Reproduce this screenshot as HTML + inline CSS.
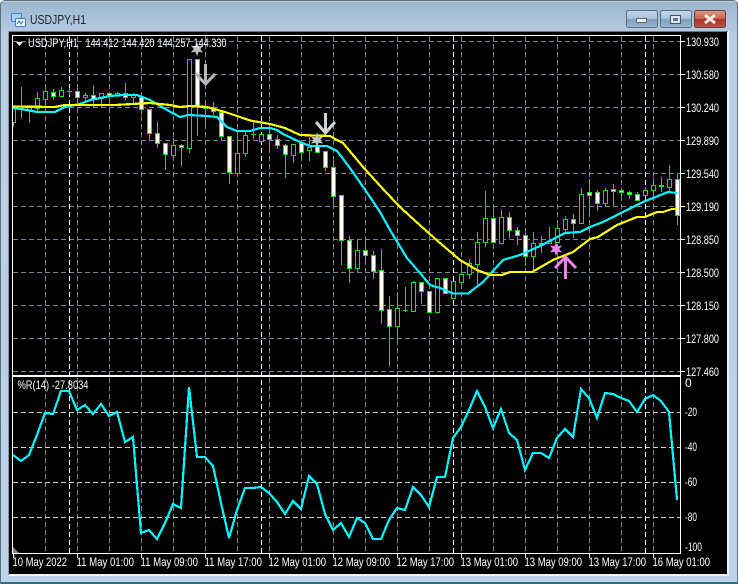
<!DOCTYPE html>
<html><head><meta charset="utf-8"><title>USDJPY,H1</title>
<style>
html,body{margin:0;padding:0;width:738px;height:584px;overflow:hidden;background:#fff}
svg{display:block;position:absolute;left:0;top:0}
text{font-family:"Liberation Sans",sans-serif;font-size:12px;fill:#fff}
.a{shape-rendering:crispEdges}
</style></head><body>
<svg width="738" height="584" viewBox="0 0 738 584" xmlns="http://www.w3.org/2000/svg">
<defs>
<linearGradient id="fr" x1="0" y1="0" x2="0" y2="1"><stop offset="0" stop-color="#9cb5cd"/><stop offset="0.06" stop-color="#b6cde4"/><stop offset="1" stop-color="#bcd3ec"/></linearGradient>
<linearGradient id="bt" x1="0" y1="0" x2="0" y2="1"><stop offset="0" stop-color="#c5d6e8"/><stop offset="0.48" stop-color="#a9c1da"/><stop offset="0.52" stop-color="#7f9fc0"/><stop offset="1" stop-color="#9cb8d4"/></linearGradient>
<linearGradient id="cl" x1="0" y1="0" x2="0" y2="1"><stop offset="0" stop-color="#dc9a8a"/><stop offset="0.48" stop-color="#c9604e"/><stop offset="0.52" stop-color="#a93228"/><stop offset="1" stop-color="#bd5340"/></linearGradient>
</defs>
<!-- window frame -->
<path d="M6 0.5H733Q737.5 0.5 737.5 5V583.5H0.5V5Q0.5 0.5 6 0.5Z" fill="url(#fr)" stroke="#5f6f7c"/>
<rect x="1" y="1" width="736" height="1" fill="#d6e2ec" opacity=".5"/>
<rect x="1" y="582" width="736" height="2" fill="#2f6f80"/>
<rect x="8" y="31" width="721" height="545" fill="#eef3f8"/>
<rect x="8" y="31" width="720" height="1" fill="#6d7882"/>
<rect x="8" y="31" width="1" height="544" fill="#8a97a3"/>
<rect x="9" y="32" width="718" height="542" fill="#000"/>
<!-- title icon -->
<rect x="11.5" y="13.5" width="10" height="8" rx="1" fill="#a8d0f0" stroke="#3a80c0"/>
<rect x="15.5" y="18.5" width="10" height="8" rx="1" fill="#eef6ff" stroke="#3a80c0"/>
<path d="M17 24L19 21L21 24L23 21" fill="none" stroke="#3a6fa8"/>
<text x="30" y="24" textLength="56" lengthAdjust="spacingAndGlyphs" style="font-size:13px;fill:#20262c">USDJPY,H1</text>
<!-- window buttons -->
<rect x="626.5" y="10.5" width="31" height="17" rx="2" fill="url(#bt)" stroke="#5a6c80"/>
<rect x="636.5" y="18.5" width="10" height="4" fill="#eef2f6" stroke="#5a6470"/>
<rect x="660.5" y="10.5" width="31" height="17" rx="2" fill="url(#bt)" stroke="#5a6c80"/>
<rect x="670.5" y="15.5" width="10" height="8" fill="#dfe6ee" stroke="#4a5460"/>
<rect x="673" y="18" width="5" height="3" fill="#5d7690"/>
<rect x="694.5" y="10.5" width="31" height="17" rx="2" fill="url(#cl)" stroke="#6a3a34"/>
<path d="M705 15L715 23M715 15L705 23" stroke="#f4eeea" stroke-width="3"/>
<!-- grid -->
<g stroke="#778899" stroke-dasharray="5,3">
<line x1="13" x2="680" y1="41.5" y2="41.5"/><line x1="13" x2="680" y1="74.5" y2="74.5"/><line x1="13" x2="680" y1="107.5" y2="107.5"/><line x1="13" x2="680" y1="140.5" y2="140.5"/><line x1="13" x2="680" y1="173.5" y2="173.5"/><line x1="13" x2="680" y1="206.5" y2="206.5"/><line x1="13" x2="680" y1="239.5" y2="239.5"/><line x1="13" x2="680" y1="272.5" y2="272.5"/><line x1="13" x2="680" y1="305.5" y2="305.5"/><line x1="13" x2="680" y1="338.5" y2="338.5"/><line x1="13" x2="680" y1="371.5" y2="371.5"/>
<line x1="45.5" x2="45.5" y1="36" y2="375"/><line x1="77.5" x2="77.5" y1="36" y2="375"/><line x1="109.5" x2="109.5" y1="36" y2="375"/><line x1="141.5" x2="141.5" y1="36" y2="375"/><line x1="173.5" x2="173.5" y1="36" y2="375"/><line x1="205.5" x2="205.5" y1="36" y2="375"/><line x1="237.5" x2="237.5" y1="36" y2="375"/><line x1="269.5" x2="269.5" y1="36" y2="375"/><line x1="301.5" x2="301.5" y1="36" y2="375"/><line x1="333.5" x2="333.5" y1="36" y2="375"/><line x1="365.5" x2="365.5" y1="36" y2="375"/><line x1="397.5" x2="397.5" y1="36" y2="375"/><line x1="429.5" x2="429.5" y1="36" y2="375"/><line x1="461.5" x2="461.5" y1="36" y2="375"/><line x1="493.5" x2="493.5" y1="36" y2="375"/><line x1="525.5" x2="525.5" y1="36" y2="375"/><line x1="557.5" x2="557.5" y1="36" y2="375"/><line x1="589.5" x2="589.5" y1="36" y2="375"/><line x1="621.5" x2="621.5" y1="36" y2="375"/><line x1="653.5" x2="653.5" y1="36" y2="375"/>
<line x1="45.5" x2="45.5" y1="378" y2="553"/><line x1="77.5" x2="77.5" y1="378" y2="553"/><line x1="109.5" x2="109.5" y1="378" y2="553"/><line x1="141.5" x2="141.5" y1="378" y2="553"/><line x1="173.5" x2="173.5" y1="378" y2="553"/><line x1="205.5" x2="205.5" y1="378" y2="553"/><line x1="237.5" x2="237.5" y1="378" y2="553"/><line x1="269.5" x2="269.5" y1="378" y2="553"/><line x1="301.5" x2="301.5" y1="378" y2="553"/><line x1="333.5" x2="333.5" y1="378" y2="553"/><line x1="365.5" x2="365.5" y1="378" y2="553"/><line x1="397.5" x2="397.5" y1="378" y2="553"/><line x1="429.5" x2="429.5" y1="378" y2="553"/><line x1="461.5" x2="461.5" y1="378" y2="553"/><line x1="493.5" x2="493.5" y1="378" y2="553"/><line x1="525.5" x2="525.5" y1="378" y2="553"/><line x1="557.5" x2="557.5" y1="378" y2="553"/><line x1="589.5" x2="589.5" y1="378" y2="553"/><line x1="621.5" x2="621.5" y1="378" y2="553"/><line x1="653.5" x2="653.5" y1="378" y2="553"/>
</g>
<g stroke="#d0d0d0" stroke-dasharray="5,3">
<line x1="13" x2="680" y1="412.5" y2="412.5"/><line x1="13" x2="680" y1="447.5" y2="447.5"/><line x1="13" x2="680" y1="482.5" y2="482.5"/><line x1="13" x2="680" y1="517.5" y2="517.5"/>
</g>
<g stroke="#fff" stroke-dasharray="5,3">
<line x1="69.5" x2="69.5" y1="36" y2="553"/><line x1="261.5" x2="261.5" y1="36" y2="553"/><line x1="453.5" x2="453.5" y1="36" y2="553"/><line x1="645.5" x2="645.5" y1="36" y2="553"/>
</g>
<!-- candles -->
<g>
<path fill="none" stroke="#00f000" d="M13.5 107V127M21.5 87V118M29.5 105V123M37.5 92V111M45.5 87V108M53.5 89V100M61.5 87V97M69.5 88V95M77.5 89V103M85.5 93V103M93.5 85V108M101.5 93V107M109.5 92V100M117.5 92V97M125.5 83V100M133.5 93V105M141.5 95V115M149.5 109V141M157.5 122V148M165.5 143V170M173.5 138V158M181.5 144V166M189.5 59V153M197.5 59V136M205.5 100V128M213.5 102V115M221.5 111V141M229.5 136V184M237.5 136V176M245.5 131V157M253.5 122V139M261.5 134V141M269.5 129V148M277.5 135V149M285.5 144V178M293.5 144V163M301.5 141V159M309.5 137V161M317.5 133V153M325.5 151V171M333.5 161V206M341.5 195V265M349.5 236V283M357.5 239V272M365.5 239V261M373.5 251V279M381.5 249V324M389.5 296V366M397.5 294V344M405.5 287V312M413.5 281V312M421.5 282V304M429.5 291V313M437.5 278V312M445.5 278V293M453.5 281V298M461.5 263V284M469.5 259V279M477.5 232V287M485.5 191V247M493.5 209V242M501.5 210V244M509.5 212V238M517.5 227V245M525.5 233V266M533.5 232V273M541.5 236V253M549.5 227V243M557.5 224V242M565.5 216V233M573.5 214V238M581.5 188V223M589.5 179V213M597.5 190V211M605.5 188V206M613.5 184V207M621.5 188V200M629.5 191V199M637.5 192V200M645.5 187V195M653.5 178V198M661.5 177V192M669.5 165V192M677.5 174V225"/>
<path fill="none" stroke="#00f000" d="M19 108.5H24M67 91.5H72M251 134.5H256M403 310.5H408"/>
<g fill="#000" stroke="#00f000">
<rect x="12.5" y="107.5" width="3" height="15"/><rect x="27.5" y="106.5" width="4" height="4"/><rect x="35.5" y="98.5" width="4" height="10"/><rect x="43.5" y="91.5" width="4" height="8"/><rect x="59.5" y="90.5" width="4" height="6"/><rect x="83.5" y="95.5" width="4" height="2"/><rect x="99.5" y="93.5" width="4" height="5"/><rect x="115.5" y="93.5" width="4" height="2"/><rect x="131.5" y="95.5" width="4" height="2"/><rect x="171.5" y="145.5" width="4" height="10"/><rect x="187.5" y="59.5" width="4" height="89"/><rect x="203.5" y="107.5" width="4" height="1"/><rect x="235.5" y="153.5" width="4" height="20"/><rect x="243.5" y="135.5" width="4" height="18"/><rect x="259.5" y="134.5" width="4" height="7"/><rect x="291.5" y="144.5" width="4" height="11"/><rect x="307.5" y="147.5" width="4" height="3"/><rect x="355.5" y="250.5" width="4" height="18"/><rect x="395.5" y="308.5" width="4" height="18"/><rect x="411.5" y="282.5" width="4" height="29"/><rect x="435.5" y="278.5" width="4" height="34"/><rect x="451.5" y="281.5" width="4" height="17"/><rect x="459.5" y="274.5" width="4" height="8"/><rect x="467.5" y="263.5" width="4" height="11"/><rect x="475.5" y="242.5" width="4" height="22"/><rect x="483.5" y="218.5" width="4" height="24"/><rect x="499.5" y="217.5" width="4" height="26"/><rect x="531.5" y="243.5" width="4" height="13"/><rect x="539.5" y="243.5" width="4" height="1"/><rect x="547.5" y="241.5" width="4" height="2"/><rect x="555.5" y="228.5" width="4" height="14"/><rect x="563.5" y="219.5" width="4" height="10"/><rect x="579.5" y="194.5" width="4" height="29"/><rect x="603.5" y="190.5" width="4" height="13"/><rect x="643.5" y="190.5" width="4" height="5"/><rect x="651.5" y="185.5" width="4" height="5"/><rect x="659.5" y="185.5" width="4" height="1"/><rect x="667.5" y="179.5" width="4" height="8"/>
</g>
<g fill="#fff" stroke="#00f000">
<rect x="51.5" y="92.5" width="4" height="4"/><rect x="75.5" y="91.5" width="4" height="6"/><rect x="91.5" y="95.5" width="4" height="4"/><rect x="107.5" y="93.5" width="4" height="3"/><rect x="123.5" y="93.5" width="4" height="4"/><rect x="139.5" y="97.5" width="4" height="12"/><rect x="147.5" y="109.5" width="4" height="24"/><rect x="155.5" y="133.5" width="4" height="10"/><rect x="163.5" y="143.5" width="4" height="11"/><rect x="179.5" y="145.5" width="4" height="2"/><rect x="195.5" y="59.5" width="4" height="47"/><rect x="211.5" y="107.5" width="4" height="4"/><rect x="219.5" y="112.5" width="4" height="24"/><rect x="227.5" y="136.5" width="4" height="36"/><rect x="267.5" y="134.5" width="4" height="5"/><rect x="275.5" y="139.5" width="4" height="6"/><rect x="283.5" y="145.5" width="4" height="9"/><rect x="299.5" y="143.5" width="4" height="9"/><rect x="315.5" y="146.5" width="4" height="6"/><rect x="323.5" y="151.5" width="4" height="16"/><rect x="331.5" y="167.5" width="4" height="29"/><rect x="339.5" y="195.5" width="4" height="45"/><rect x="347.5" y="240.5" width="4" height="28"/><rect x="363.5" y="250.5" width="4" height="5"/><rect x="371.5" y="255.5" width="4" height="16"/><rect x="379.5" y="270.5" width="4" height="40"/><rect x="387.5" y="309.5" width="4" height="17"/><rect x="419.5" y="282.5" width="4" height="9"/><rect x="427.5" y="291.5" width="4" height="21"/><rect x="443.5" y="278.5" width="4" height="15"/><rect x="491.5" y="218.5" width="4" height="24"/><rect x="507.5" y="217.5" width="4" height="13"/><rect x="515.5" y="230.5" width="4" height="5"/><rect x="523.5" y="235.5" width="4" height="21"/><rect x="571.5" y="219.5" width="4" height="4"/><rect x="587.5" y="192.5" width="4" height="3"/><rect x="595.5" y="192.5" width="4" height="11"/><rect x="611.5" y="189.5" width="4" height="2"/><rect x="619.5" y="190.5" width="4" height="2"/><rect x="627.5" y="192.5" width="4" height="2"/><rect x="635.5" y="194.5" width="4" height="6"/><rect x="675.5" y="179.5" width="4" height="36"/>
</g>
</g>
<!-- moving averages -->
<polyline class="a" fill="none" stroke="#00f8ff" stroke-width="2.2" points="13,108 27,110 37,112 55,112 65,107 80,104 90,100 110,96 123,95 137,95 150,100 167,110 180,117 188,115 207,116 217,117 227,127 237,131 250,131 260,128 270,128 277,130 283,134 300,142 310,146 327,146 337,151 350,168 370,197 380,212 390,230 407,258 420,273 430,285 440,288 453,293.5 468,293.5 483,282 503,260 520,255 540,246 565,233 580,232 590,227 603,222 623,212 643,202 668,192 677,193"/>
<polyline class="a" fill="none" stroke="#ffff00" stroke-width="2.2" points="13,106.5 55,107 65,105 115,105 150,103 170,105 180,107 190,106 207,107 225,112 240,117 250,120.5 270,124 285,128 300,135 330,136 335,139 343,143 363,167 383,189 400,207 423,228 440,243 460,260 477,270 490,275 502,275 510,272 532,272 553,260 573,252 590,239 598,237 617,225 637,217 645,217 657,212 663,212 672,209 677,209"/>
<!-- signals -->
<polygon transform="translate(197,49)" fill="#c4c4c4" points="0,-7 1.6,-2.77 6.06,-3.5 3.2,0 6.06,3.5 1.6,2.77 0,7 -1.6,2.77 -6.06,3.5 -3.2,0 -6.06,-3.5 -1.6,-2.77"/>
<polygon transform="translate(317,140)" fill="#c4c4c4" points="0,-7 1.6,-2.77 6.06,-3.5 3.2,0 6.06,3.5 1.6,2.77 0,7 -1.6,2.77 -6.06,3.5 -3.2,0 -6.06,-3.5 -1.6,-2.77"/>
<polygon transform="translate(556,249)" fill="#ee82ee" points="0,-7 1.6,-2.77 6.06,-3.5 3.2,0 6.06,3.5 1.6,2.77 0,7 -1.6,2.77 -6.06,3.5 -3.2,0 -6.06,-3.5 -1.6,-2.77"/>
<path d="M205.5 64V84M196 74L205.5 84L215 74" fill="none" stroke="#b8b8b8" stroke-width="3"/>
<path d="M325.5 113V133M316 122L325.5 133L335 122" fill="none" stroke="#d0d4d8" stroke-width="3"/>
<path d="M565.5 258V279M555 268L565.5 257L576 268" fill="none" stroke="#ee82ee" stroke-width="3"/>
<!-- %R -->
<polyline class="a" fill="none" stroke="#00f8ff" stroke-width="2.2" points="13,455 21,461 29,455 37,435 45,413 53,414 61,391 69,391 77,410 85,405 93,414 101,404 109,416 117,412 125,442 133,437 141,533 149,530 157,539 165,523 173,504 181,508 189,387 197,457 205,457 213,466 221,503 229,538 237,510 245,488 253,488 261,487 269,493 277,502 285,514 293,501 301,509 309,476 317,484 325,514 333,530 341,523 349,537 357,518 365,523 373,539 381,539 389,520 397,508 405,510 413,487 421,495 429,507 437,477 445,477 453,438 461,427 469,410 477,391 485,407 493,428 501,409 509,433 517,440 525,470 533,453 541,453 549,458 557,438 565,429 573,437 581,389 589,398 597,418 605,393 613,394 621,398 629,401 637,412 645,399 653,395 661,401 669,412 677,500"/>
<!-- frames -->
<g fill="#fff">
<rect x="12" y="35" width="669" height="1"/><rect x="12" y="35" width="1" height="519"/><rect x="680" y="35" width="1" height="519"/><rect x="12" y="375" width="669" height="2"/><rect x="12" y="553" width="669" height="1"/>
<rect x="681" y="41" width="4" height="1"/><rect x="681" y="74" width="4" height="1"/><rect x="681" y="107" width="4" height="1"/><rect x="681" y="140" width="4" height="1"/><rect x="681" y="173" width="4" height="1"/><rect x="681" y="206" width="4" height="1"/><rect x="681" y="239" width="4" height="1"/><rect x="681" y="272" width="4" height="1"/><rect x="681" y="305" width="4" height="1"/><rect x="681" y="338" width="4" height="1"/><rect x="681" y="371" width="4" height="1"/>
<rect x="13" y="553" width="1" height="5"/><rect x="77" y="553" width="1" height="5"/><rect x="141" y="553" width="1" height="5"/><rect x="205" y="553" width="1" height="5"/><rect x="269" y="553" width="1" height="5"/><rect x="333" y="553" width="1" height="5"/><rect x="397" y="553" width="1" height="5"/><rect x="461" y="553" width="1" height="5"/><rect x="525" y="553" width="1" height="5"/><rect x="589" y="553" width="1" height="5"/><rect x="653" y="553" width="1" height="5"/>
</g>
<polygon points="13,547 13,553 19,553" fill="#778899"/>
<polygon points="16,42 23,42 19.5,46" fill="#fff"/>
<!-- header text -->
<text x="28" y="47" textLength="50" lengthAdjust="spacingAndGlyphs">USDJPY,H1</text>
<text x="85.5" y="47" textLength="33" lengthAdjust="spacingAndGlyphs">144.412</text>
<text x="121.5" y="47" textLength="33" lengthAdjust="spacingAndGlyphs">144.420</text>
<text x="157.5" y="47" textLength="33" lengthAdjust="spacingAndGlyphs">144.257</text>
<text x="193.5" y="47" textLength="33" lengthAdjust="spacingAndGlyphs">144.330</text>
<text x="17.5" y="389" textLength="71" lengthAdjust="spacingAndGlyphs">%R(14) -27.8034</text>
<!-- price axis -->
<text x="686" y="46" textLength="33" lengthAdjust="spacingAndGlyphs">130.930</text>
<text x="686" y="79" textLength="33" lengthAdjust="spacingAndGlyphs">130.580</text>
<text x="686" y="112" textLength="33" lengthAdjust="spacingAndGlyphs">130.240</text>
<text x="686" y="145" textLength="33" lengthAdjust="spacingAndGlyphs">129.890</text>
<text x="686" y="178" textLength="33" lengthAdjust="spacingAndGlyphs">129.540</text>
<text x="686" y="211" textLength="33" lengthAdjust="spacingAndGlyphs">129.190</text>
<text x="686" y="244" textLength="33" lengthAdjust="spacingAndGlyphs">128.850</text>
<text x="686" y="277" textLength="33" lengthAdjust="spacingAndGlyphs">128.500</text>
<text x="686" y="310" textLength="33" lengthAdjust="spacingAndGlyphs">128.150</text>
<text x="686" y="343" textLength="33" lengthAdjust="spacingAndGlyphs">127.800</text>
<text x="686" y="376" textLength="33" lengthAdjust="spacingAndGlyphs">127.460</text>
<text x="685" y="387">0</text>
<text x="685" y="416" textLength="12" lengthAdjust="spacingAndGlyphs">-20</text>
<text x="685" y="451" textLength="12" lengthAdjust="spacingAndGlyphs">-40</text>
<text x="685" y="486" textLength="12" lengthAdjust="spacingAndGlyphs">-60</text>
<text x="685" y="521" textLength="12" lengthAdjust="spacingAndGlyphs">-80</text>
<text x="685" y="551" textLength="17" lengthAdjust="spacingAndGlyphs">-100</text>
<!-- time axis -->
<text x="12.5" y="566" textLength="54.5" lengthAdjust="spacingAndGlyphs">10 May 2022</text>
<text x="76.5" y="566" textLength="57.5" lengthAdjust="spacingAndGlyphs">11 May 01:00</text>
<text x="140.5" y="566" textLength="57.5" lengthAdjust="spacingAndGlyphs">11 May 09:00</text>
<text x="204.5" y="566" textLength="57.5" lengthAdjust="spacingAndGlyphs">11 May 17:00</text>
<text x="268.5" y="566" textLength="57.5" lengthAdjust="spacingAndGlyphs">12 May 01:00</text>
<text x="332.5" y="566" textLength="57.5" lengthAdjust="spacingAndGlyphs">12 May 09:00</text>
<text x="396.5" y="566" textLength="57.5" lengthAdjust="spacingAndGlyphs">12 May 17:00</text>
<text x="460.5" y="566" textLength="57.5" lengthAdjust="spacingAndGlyphs">13 May 01:00</text>
<text x="524.5" y="566" textLength="57.5" lengthAdjust="spacingAndGlyphs">13 May 09:00</text>
<text x="588.5" y="566" textLength="57.5" lengthAdjust="spacingAndGlyphs">13 May 17:00</text>
<text x="652.5" y="566" textLength="57.5" lengthAdjust="spacingAndGlyphs">16 May 01:00</text>
</svg>
</body></html>
